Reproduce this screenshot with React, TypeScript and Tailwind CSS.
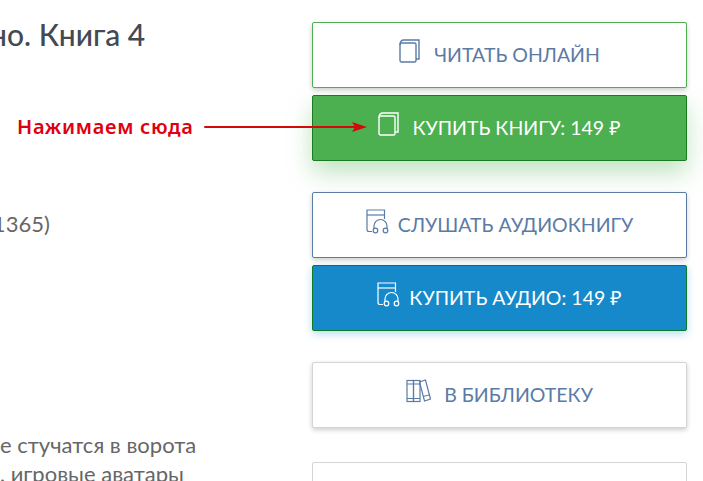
const font = 'font-["Lato","Noto_Sans",sans-serif]'

function BookIcon({ className }: { className?: string }) {
  return (
    <svg width="21" height="24" viewBox="0 0 21 24" fill="none" stroke="currentColor" strokeWidth="1.4" className={className}>
      <rect x="1" y="4" width="16" height="19" rx="1.5" />
      <path d="M1 6 C1 2.5 2.5 1 5 1 H20 V20 H17" />
    </svg>
  )
}

function AudioIcon({ className }: { className?: string }) {
  return (
    <svg width="23" height="25" viewBox="0 0 23 25" fill="none" stroke="currentColor" strokeWidth="1.2" className={className}>
      <path d="M6 22.5 H3 Q1 22.5 1 20.5 V1 H18.5 V10" />
      <path d="M1 6 H18.5" />
      <path d="M8 20 V17 A6.5 6.5 0 0 1 21 17 V20" />
      <circle cx="9.5" cy="21.5" r="2.3" />
      <circle cx="19.5" cy="21.5" r="2.3" />
    </svg>
  )
}

function ShelfIcon({ className }: { className?: string }) {
  return (
    <svg width="25" height="24" viewBox="0 0 25 24" fill="none" stroke="currentColor" strokeWidth="1.2" className={className}>
      <rect x="1" y="1.5" width="6.5" height="21" />
      <rect x="7.5" y="1.5" width="6.5" height="21" />
      <path d="M1 5 H14 M1 19.5 H14" />
      <path d="M13.5 3 L19.5 1 L24.5 20 L18.5 22 Z" />
      <path d="M17 17.5 L23 16" />
    </svg>
  )
}

function ActionButton({ label, icon, tone, gap, className = '' }: { label: string; icon: React.ReactNode; tone: string; gap: string; className?: string }) {
  return (
    <button className={`flex h-[66px] w-full shrink-0 items-center justify-center rounded-[2px] border text-[19.5px] ${gap} ${tone} ${className}`}>
      <span className="-translate-y-[4px]">{icon}</span>
      <span>{label}</span>
    </button>
  )
}

export default function App() {
  return (
    <div className={`relative flex h-[481px] w-[703px] overflow-hidden bg-white ${font}`}>
      {/* left column, cut off by the crop */}
      <div className="flex w-[312px] shrink-0 flex-col overflow-hidden">
        <h1 className="mt-[16px] ml-[-10px] shrink-0 whitespace-nowrap text-[30px] font-medium leading-[36px] text-[#434a54]">
          но. Книга 4
        </h1>
        <p className="mt-[157px] ml-[-13px] shrink-0 whitespace-nowrap text-[22px] leading-[30px] text-[#666]">(1365)</p>
        <p className="mt-[191px] shrink-0 whitespace-nowrap text-[22px] leading-[29px] text-[#666]">
          е стучатся в ворота
        </p>
        <p className="shrink-0 whitespace-nowrap text-[22px] leading-[29px] text-[#666]">, игровые аватары</p>
      </div>

      {/* buttons */}
      <div className="mt-[22px] flex w-[375px] shrink-0 flex-col">
        <ActionButton
          label="ЧИТАТЬ ОНЛАЙН"
          gap="gap-[14px]"
          icon={<BookIcon />}
          tone="border-[#4caf50] bg-white text-[#5a7ba6] shadow-[0_2px_5px_rgba(0,0,0,0.2)]"
        />
        <ActionButton
          label="КУПИТЬ КНИГУ: 149 ₽"
          gap="gap-[13px]"
          className="mt-[7px] h-[65px]"
          icon={<BookIcon />}
          tone="border-[#1b7a1f] bg-[#4caf50] text-white shadow-[0_12px_25px_rgba(76,175,80,0.35)]"
        />
        <ActionButton
          label="СЛУШАТЬ АУДИОКНИГУ"
          gap="gap-[9px]"
          className="mt-[31px]"
          icon={<AudioIcon />}
          tone="border-[#5a7ba6] bg-white text-[#5a7ba6] shadow-[0_2px_5px_rgba(0,0,0,0.2)]"
        />
        <ActionButton
          label="КУПИТЬ АУДИО: 149 ₽"
          gap="gap-[9px]"
          className="mt-[7px]"
          icon={<AudioIcon />}
          tone="border-[#0b7a2a] bg-[#1689ca] text-white shadow-[0_3px_8px_rgba(22,137,202,0.3)]"
        />
        <ActionButton
          label="В БИБЛИОТЕКУ"
          gap="gap-[13px]"
          className="mt-[31px]"
          icon={<ShelfIcon />}
          tone="border-[#d5d5d5] bg-white text-[#5a7ba6] shadow-[0_2px_5px_rgba(0,0,0,0.2)]"
        />
        <div className="mt-[34px] h-[66px] shrink-0 rounded-[2px] border border-[#d5d5d5] bg-white" />
      </div>

      {/* annotation over the page */}
      <span className='absolute left-[17px] top-[114px] font-["Noto_Sans",sans-serif] text-[20px] font-semibold leading-[26px] tracking-[0.7px] text-[#e0000f]'>
        Нажимаем сюда
      </span>
      <svg width="170" height="14" viewBox="0 0 170 14" className="absolute left-[203px] top-[120px]">
        <path d="M2 7 H152" stroke="#d40a0a" strokeWidth="2" strokeLinecap="round" />
        <path d="M149 2 L164 7 L149 12 L152 7 Z" fill="#d40a0a" />
      </svg>
    </div>
  )
}
